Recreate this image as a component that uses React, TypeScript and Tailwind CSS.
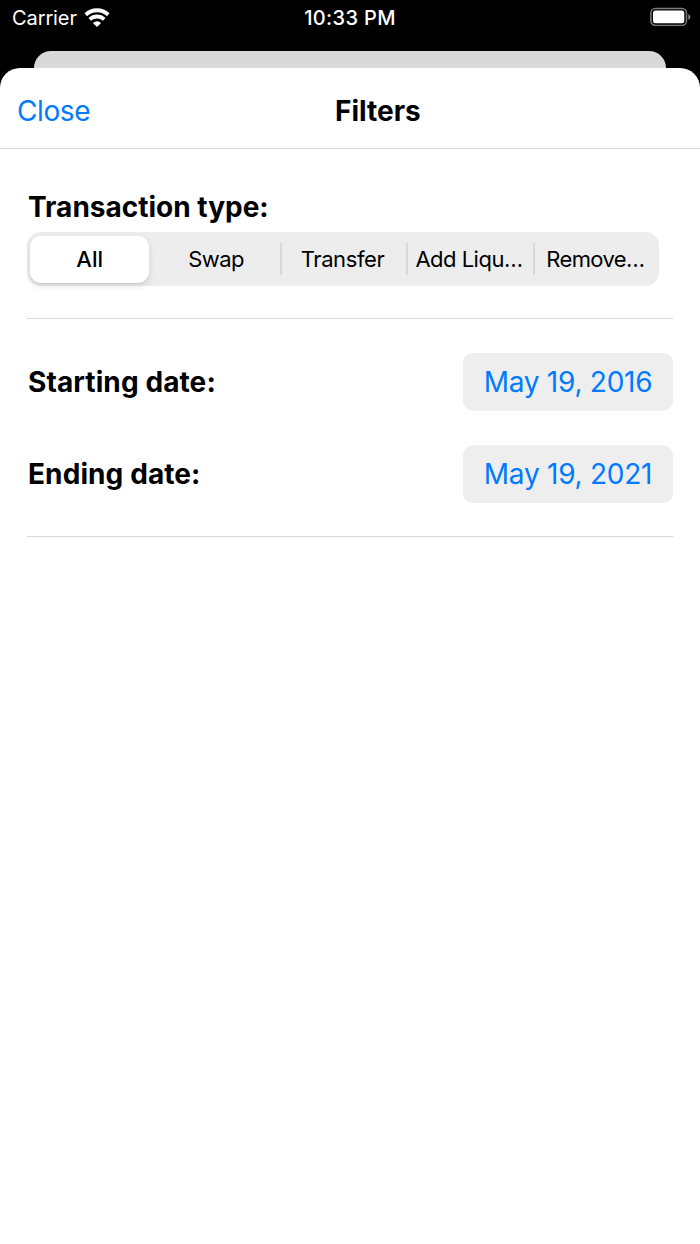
import React, { useState } from "react";

const transactionTypes = [
  { id: "all", label: "All", textClass: "tracking-[0.1px]" },
  { id: "swap", label: "Swap", textClass: "tracking-[-0.5px]" },
  { id: "transfer", label: "Transfer", textClass: "tracking-[-0.4px]" },
  { id: "add", label: "Add Liqu…", textClass: "tracking-[-0.5px]" },
  { id: "remove", label: "Remove…", textClass: "tracking-[-0.6px]" },
];

function StatusBar() {
  return (
    <div className="grid h-[51px] grid-cols-3 items-start px-3 pt-[6px] text-[20px] leading-6 text-white">
      <div className="flex items-center gap-[7px]">
        <span className="tracking-[-0.1px]">Carrier</span>
        <svg width="26" height="20" viewBox="0 0 26 20">
          <path d="M.5 5.3a18 18 0 0 1 25 0l-2.5 3a14.4 14.4 0 0 0-20 0z" fill="white" />
          <path d="M4.5 10a12.3 12.3 0 0 1 17 0L19 12.8a8.8 8.8 0 0 0-12 0z" fill="white" />
          <path d="M8.9 14.9a6.2 6.2 0 0 1 8.2 0L13 19z" fill="white" />
        </svg>
      </div>
      <span className="text-center font-medium tracking-[0.35px] whitespace-nowrap">10:33 PM</span>
      <div className="flex justify-end">
        <svg width="42" height="20" viewBox="0 0 42 20" className="-mr-[4px]">
          <rect x="0.9" y="2.4" width="35.6" height="17" rx="4.5" fill="none" stroke="#7c7c7c" strokeWidth="1.5" />
          <rect x="3" y="4.5" width="31.3" height="12.8" rx="2.5" fill="white" />
          <path d="M38.3 8.2c2.6 1 2.6 4.6 0 5.6z" fill="#8e8e8e" />
        </svg>
      </div>
    </div>
  );
}

function DateRow({ label, value }: { label: string; value: string }) {
  return (
    <div className="flex h-[58px] items-center justify-between">
      <span className="pl-px text-[28px] font-bold tracking-[0.1px]">{label}</span>
      <button className="h-[58px] w-[210px] rounded-[10px] bg-[#eeeeef] text-[28px] tracking-[-0.25px] text-[#007aff]">
        {value}
      </button>
    </div>
  );
}

export default function App() {
  const [selected, setSelected] = useState("all");

  return (
    <div className="flex h-[1244px] w-[700px] flex-col overflow-hidden bg-black font-['Inter',sans-serif] text-black">
      <StatusBar />
      <div className="mx-[34px] h-[17px] shrink-0 rounded-t-[17px] bg-[#d9d9d9]" />
      <div className="flex-1 rounded-t-[20px] bg-white">
        <header className="grid h-[81px] grid-cols-[318px_auto_1fr] items-center border-b border-[#d8d8d8] pt-[5px] pl-[17px]">
          <button className="text-left text-[28px] tracking-[-0.4px] text-[#007aff]">Close</button>
          <h1 className="text-[28px] font-bold">Filters</h1>
        </header>
        <main className="px-[27px] pt-[38px]">
          <h2 className="pl-px text-[28px] leading-10 font-bold">Transaction type:</h2>
          <div className="mt-[5px] flex h-[54px] w-[632px] items-center rounded-[14px] bg-[#ededee]">
            {transactionTypes.map((type, i) => {
              const active = selected === type.id;
              const showDivider = i > 0 && !active && selected !== transactionTypes[i - 1].id;
              return (
                <div
                  key={type.id}
                  className={`flex h-8 min-w-0 flex-1 items-center border-l-2 ${showDivider ? "border-[#d9d9da]" : "border-transparent"}`}
                >
                  <button
                    onClick={() => setSelected(type.id)}
                    className={`mr-1 ml-px h-[47px] flex-1 rounded-[11px] text-[22px] whitespace-nowrap ${type.textClass} ${active ? "bg-white font-medium shadow-[0_3px_6px_rgba(0,0,0,0.12),0_1px_1px_rgba(0,0,0,0.06)]" : ""}`}
                  >
                    {type.label}
                  </button>
                </div>
              );
            })}
          </div>
          <hr className="mt-8 border-[#d8d8d8]" />
          <div className="mt-[34px] flex flex-col gap-[34px]">
            <DateRow label="Starting date:" value="May 19, 2016" />
            <DateRow label="Ending date:" value="May 19, 2021" />
          </div>
          <hr className="mt-[33px] border-[#d8d8d8]" />
        </main>
      </div>
    </div>
  );
}
